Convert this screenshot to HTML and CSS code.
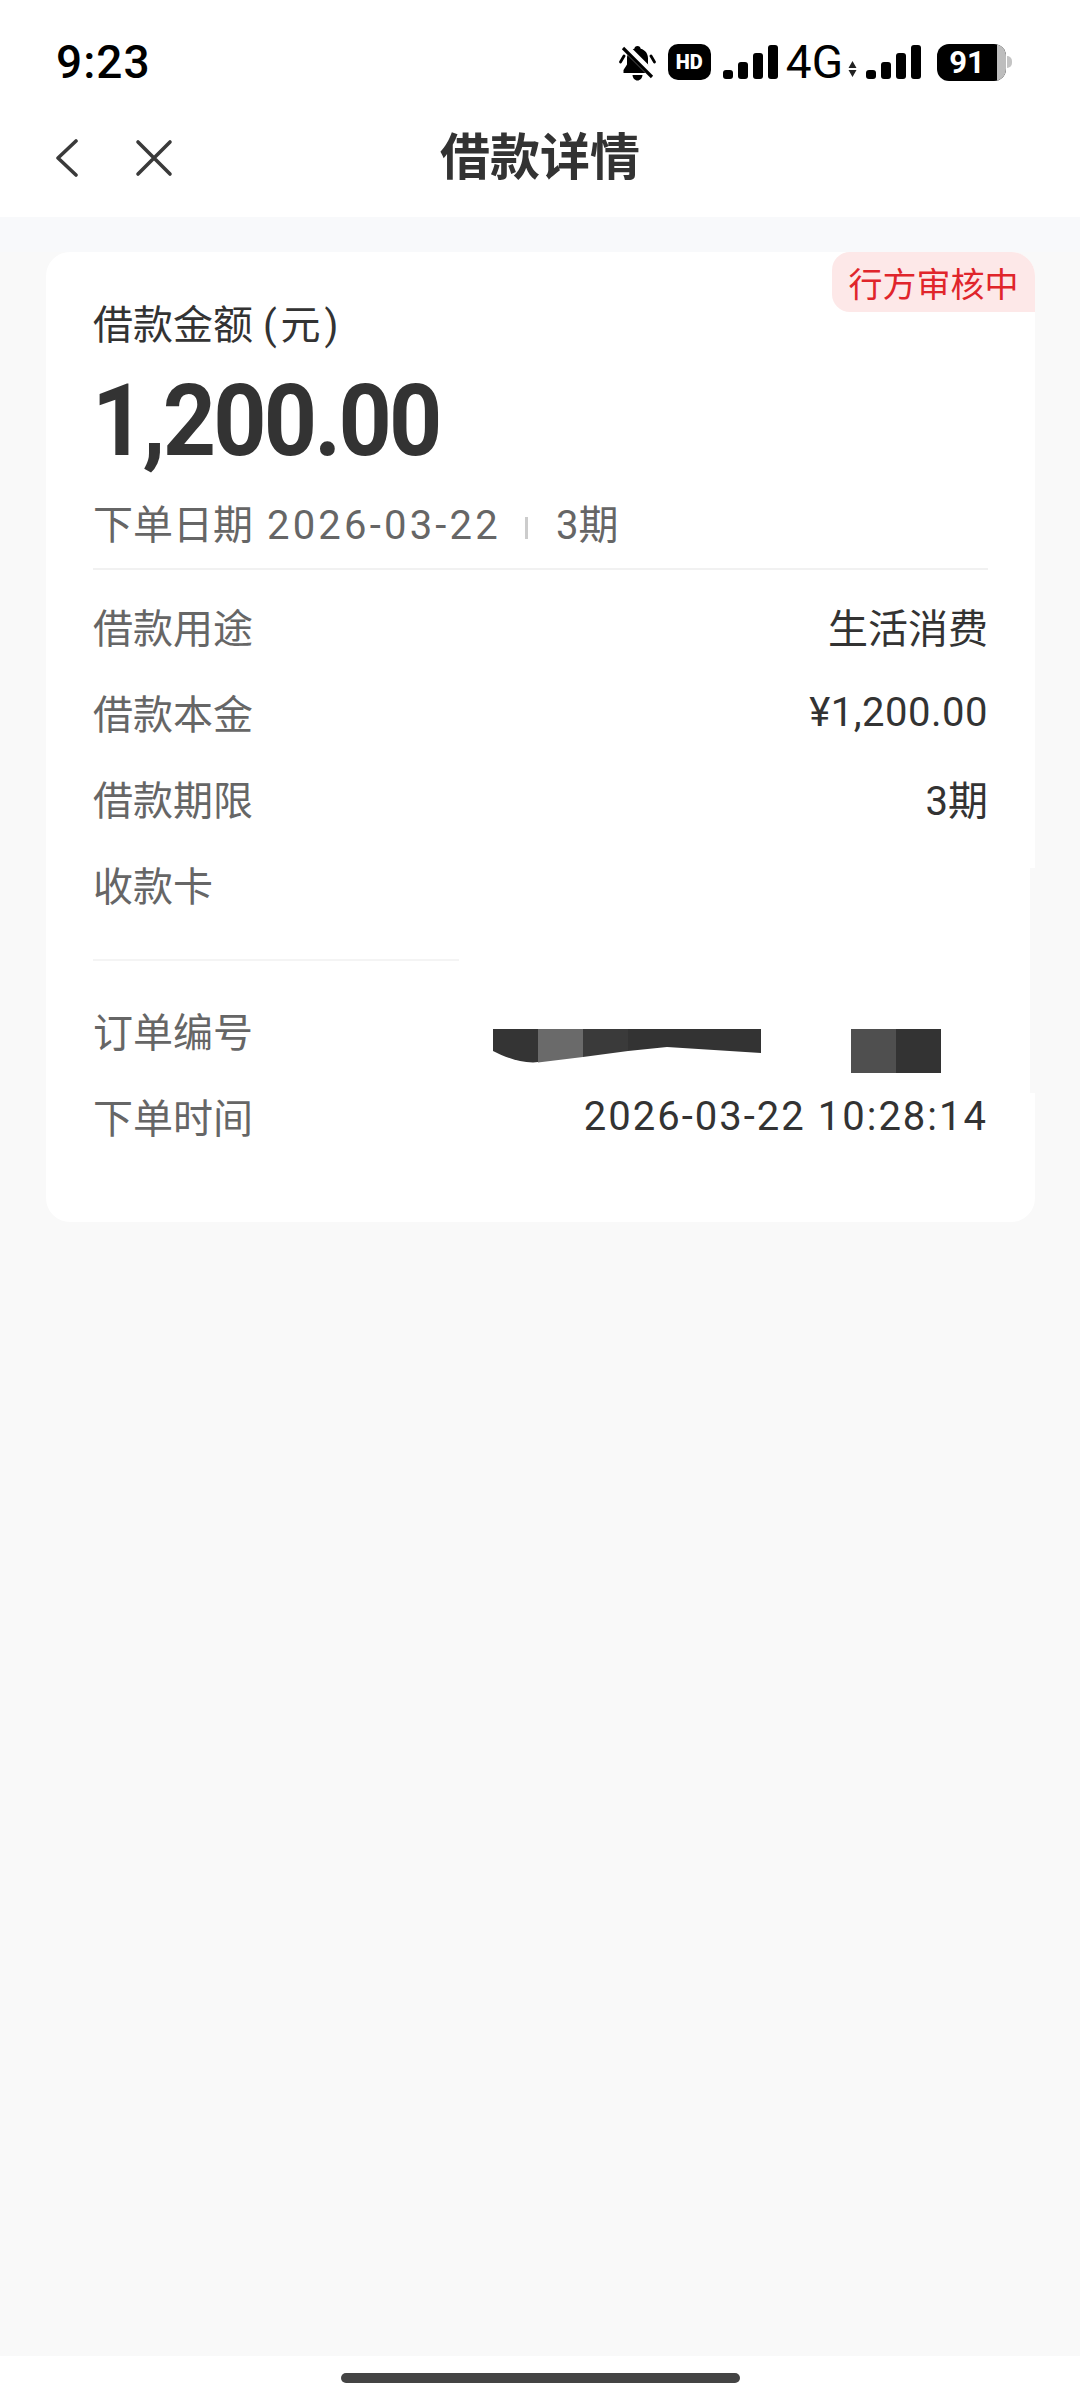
FILE: index.html
```html
<!DOCTYPE html>
<html lang="zh-CN">
<head>
  <meta charset="UTF-8">
  <meta name="viewport" content="width=device-width, initial-scale=1.0">
  <title>借款详情</title>
  <link rel="stylesheet" href="styles.css">
</head>
<body>

  <div class="top">
    <!-- Status bar -->
    <div class="status">
      <div class="time">9:23</div>
      <div class="status-icons">
        <svg class="bell" width="37" height="37" viewBox="0 0 37 37">
          <path d="M18.500 2c1.800 0 3 1.200 3.200 2.800 4.800 1.300 7.300 5 7.300 9.700v6l3.500 5.500V29H4.500v-3L8 20.500v-6c0-4.700 2.500-8.400 7.300-9.700C15.500 3.200 16.700 2 18.500 2zM13.500 31h10c-.3 3.200-2.300 5.500-5 5.500s-4.700-2.300-5-5.500z" fill="#000"/>
          <path d="M5 2l29 29" stroke="#fff" stroke-width="8"/>
          <path d="M4 4l29 29" stroke="#000" stroke-width="3.200"/>
          <path d="M5 12l-3.500 6M32 12l3.500 6" stroke="#000" stroke-width="2.800" stroke-linecap="round"/>
        </svg>
        <div class="hd">HD</div>
        <div class="signal">
          <span class="s1"></span><span class="s2"></span><span class="s3"></span><span class="s4"></span>
        </div>
        <div class="net">4G</div>
        <svg class="arrows" width="9" height="16" viewBox="0 0 9 16">
          <path d="M4.500 0l4 7H.5zM4.500 16l-4-7h8z" fill="#222"/>
        </svg>
        <div class="signal">
          <span class="s1"></span><span class="s2"></span><span class="s3"></span><span class="s4"></span>
        </div>
        <div class="battery">
          <div class="battery-body">91<span class="battery-rest"></span></div>
          <div class="battery-nub"></div>
        </div>
      </div>
    </div>

    <!-- Title bar -->
    <nav class="titlebar">
      <div class="nav-icons">
        <svg width="24" height="38" viewBox="0 0 24 38" fill="none">
          <path d="M21 2L3 19l18 17" stroke="#3a3a3a" stroke-width="3.600" stroke-linecap="round" stroke-linejoin="round"/>
        </svg>
        <svg width="38" height="38" viewBox="0 0 38 38" fill="none">
          <path d="M3 3l32 32M35 3L3 35" stroke="#3a3a3a" stroke-width="3.600" stroke-linecap="round"/>
        </svg>
      </div>
      <h1>借款详情</h1>
    </nav>
  </div>

  <div class="band"></div>

  <main class="content">
    <section class="card">
      <span class="badge">行方审核中</span>
      <i class="edge-patch"></i>

      <div class="summary">
        <div class="amount-label">借款金额 <span class="unit">(元)</span></div>
        <div class="amount">1,200.00</div>
        <div class="meta">
          <span>下单日期<span class="meta-date">2026-03-22</span></span>
          <i class="meta-sep"></i>
          <span>3期</span>
        </div>
      </div>

      <div class="rows">
        <div class="row"><span class="key">借款用途</span><span class="val">生活消费</span></div>
        <div class="row"><span class="key">借款本金</span><span class="val money">¥1,200.00</span></div>
        <div class="row"><span class="key">借款期限</span><span class="val">3期</span></div>
        <div class="row"><span class="key">收款卡</span></div>
      </div>

      <div class="short-line"></div>

      <div class="rows order">
        <div class="row">
          <span class="key">订单编号</span>
          <!-- blacked out order number -->
          <svg class="redact" width="448" height="44" viewBox="0 0 448 44">
            <path d="M0 0h45v33l-5 .5C25 33 12 28 0 22z" fill="#343434"/>
            <path d="M45 0h45v28L45 33.500z" fill="#6a6a6a"/>
            <path d="M90 0h45v22L90 28z" fill="#3a3a3a"/>
            <path d="M135 0h133v24l-94-6-39 4z" fill="#333"/>
            <rect x="358" width="45" height="44" fill="#4f4f4f"/>
            <rect x="403" width="45" height="44" fill="#333"/>
          </svg>
        </div>
        <div class="row"><span class="key">下单时间</span><span class="val stamp">2026-03-22 10:28:14</span></div>
      </div>
    </section>
  </main>

  <div class="homebar"><span></span></div>

</body>
</html>
```

FILE: styles.css
```css
* { margin: 0; padding: 0; box-sizing: border-box; }
html, body { height: 100%; }
body {
  display: flex; flex-direction: column;
  background: #f9f9f9; color: #333;
  font-family: Roboto, "Noto Sans CJK SC", sans-serif;
}

/* Top area */
.top { background: #fff; height: 217px; }

.status {
  display: flex; align-items: center; justify-content: space-between;
  height: 124px; padding: 0 68px 0 56px;
}
.time { font-size: 46px; font-weight: 500; color: #000; letter-spacing: 1px; }
.status-icons { display: flex; align-items: center; height: 37px; }
.bell { margin-right: 12px; }
.hd {
  width: 43px; height: 36px; margin-right: 12px;
  display: flex; align-items: center; justify-content: center;
  background: #000; color: #fff; border-radius: 10px;
  font-size: 20px; font-weight: 900;
}
.signal { display: flex; align-items: flex-end; gap: 5px; height: 34px; }
.signal span { width: 10px; background: #000; border-radius: 3px; }
.signal .s1 { height: 9px; }
.signal .s2 { height: 17px; }
.signal .s3 { height: 26px; }
.signal .s4 { height: 34px; }
.net { margin-left: 8px; font-size: 46px; line-height: 37px; color: #000; }
.arrows { margin: 14px 9px 0 5px; }
.battery { display: flex; align-items: center; margin-left: 16px; }
.battery-body {
  position: relative; overflow: hidden;
  width: 69px; height: 37px; padding-right: 9px;
  display: flex; align-items: center; justify-content: center;
  background: #000; color: #fff; border-radius: 12px;
  font-size: 31px; font-weight: 700;
}
.battery-rest { position: absolute; top: 0; right: 0; bottom: 0; width: 9px; background: #bdbdbd; }
.battery-nub { width: 5px; height: 12px; margin-left: 1px; background: #c4c4c4; border-radius: 0 6px 6px 0; }

.titlebar {
  position: relative;
  display: flex; align-items: center; justify-content: center;
  height: 64px; margin-top: -3px;
}
.nav-icons {
  position: absolute; left: 55px; top: 18px;
  display: flex; align-items: center; gap: 56px;
}
.titlebar h1 { font-size: 50px; font-weight: 700; color: #333; }

.band { background: #f8f9fb; height: 35px; }

/* Card */
.content { flex: 1; padding: 0 45px 0 46px; }
.card {
  position: relative;
  background: #fff; border-radius: 24px;
  height: 970px; padding: 0 47px;
}
.badge {
  position: absolute; top: 0; right: 0;
  height: 60px; width: 203px;
  display: flex; align-items: center; justify-content: center;
  background: #fde8e8; color: #e0252b; font-size: 34px;
  border-radius: 18px 24px 0 18px;
}
/* retouched strip on the right edge of the card */
.edge-patch { position: absolute; top: 616px; right: 0; width: 5px; height: 225px; background: #f9f9f9; }

.summary { padding-top: 45px; padding-bottom: 13px; border-bottom: 2px solid #f1f1f1; }
.amount-label { font-size: 40px; line-height: 58px; color: #333; }
.unit { letter-spacing: 4px; }
.amount {
  margin-top: 5px; margin-left: -1px;
  font-size: 100px; font-weight: 700; line-height: 122px; color: #333;
  letter-spacing: -3px; transform: scaleX(.93); transform-origin: left center;
}
.meta { display: flex; align-items: center; margin-top: 15px; font-size: 40px; line-height: 58px; color: #666; }
.meta-date { margin-left: 14px; letter-spacing: 3.200px; }
.meta-sep { width: 3px; height: 22px; margin: 4px 28px 0 24px; background: #ccc; }

.rows { padding-top: 13px; }
.rows.order { padding-top: 26px; }
.row { display: flex; align-items: center; justify-content: space-between; height: 86px; font-size: 40px; }
.key { color: #666; }
.val { color: #333; }
.money { letter-spacing: .5px; }
.stamp { letter-spacing: 2px; }
.redact { display: block; margin: 42px 47px 0 0; }

.short-line { width: 366px; margin-top: 32px; border-top: 2px solid #f4f4f4; }

/* Home indicator */
.homebar {
  background: #fff; height: 44px;
  display: flex; justify-content: center; padding-top: 17px;
}
.homebar span { width: 399px; height: 10px; background: #444; border-radius: 5px; }
```
